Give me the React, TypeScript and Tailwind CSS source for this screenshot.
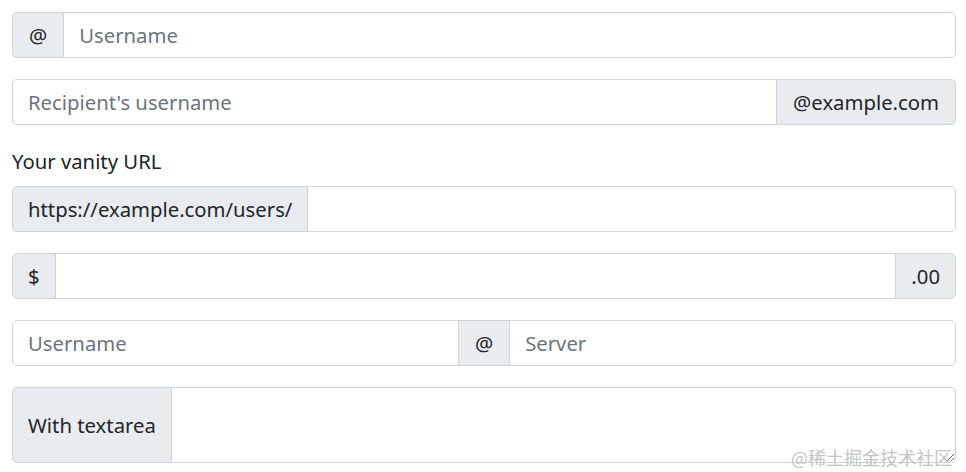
import React from "react";

const font = { fontFamily: '"Noto Sans", "Open Sans", sans-serif' };

export default function App() {
  const addon =
    "flex items-center px-[15px] bg-[#e9ecef] border border-[#ced4da] text-[#212529] whitespace-nowrap";
  const input =
    "flex-1 min-w-0 px-[15px] bg-white border border-[#ced4da] text-[#212529] placeholder:text-[#6c757d] outline-none";
  return (
    <div
      className="relative w-[966px] h-[472px] bg-white p-[12px] pr-[10px] text-[20.3px] leading-normal text-[#212529]"
      style={font}
    >
      <div className="flex h-[46px] mb-[21px]">
        <span className={`${addon} px-[16px] rounded-l-[5px]`}>@</span>
        <input className={`${input} -ml-px rounded-r-[5px]`} placeholder="Username" />
      </div>
      <div className="flex h-[46px] mb-[21px]">
        <input className={`${input} rounded-l-[5px]`} placeholder="Recipient's username" />
        <span className={`${addon} -ml-px px-[16px] rounded-r-[5px]`}>@example.com</span>
      </div>
      <label className="block h-[30px] mb-[10px] leading-[30px]">Your vanity URL</label>
      <div className="flex h-[46px] mb-[21px]">
        <span className={`${addon} rounded-l-[5px]`}>https://example.com/users/</span>
        <input className={`${input} -ml-px rounded-r-[5px]`} />
      </div>
      <div className="flex h-[46px] mb-[21px]">
        <span className={`${addon} rounded-l-[5px]`}>$</span>
        <input className={`${input} -ml-px`} />
        <span className={`${addon} -ml-px rounded-r-[5px]`}>.00</span>
      </div>
      <div className="flex h-[46px] mb-[21px]">
        <input className={`${input} rounded-l-[5px]`} placeholder="Username" />
        <span className={`${addon} -ml-px px-[16px]`}>@</span>
        <input className={`${input} -ml-px rounded-r-[5px]`} placeholder="Server" />
      </div>
      <div className="flex h-[76px]">
        <span className={`${addon} rounded-l-[5px]`}>With textarea</span>
        <textarea className={`${input} -ml-px rounded-r-[5px] py-[7px]`} />
      </div>
      <div
        className="absolute right-[14px] bottom-[6px] text-[18px] leading-none text-[#c4c4c4] pointer-events-none"
        style={{ fontFamily: '"Noto Sans CJK SC", sans-serif' }}
      >
        @稀土掘金技术社区
      </div>
    </div>
  );
}
